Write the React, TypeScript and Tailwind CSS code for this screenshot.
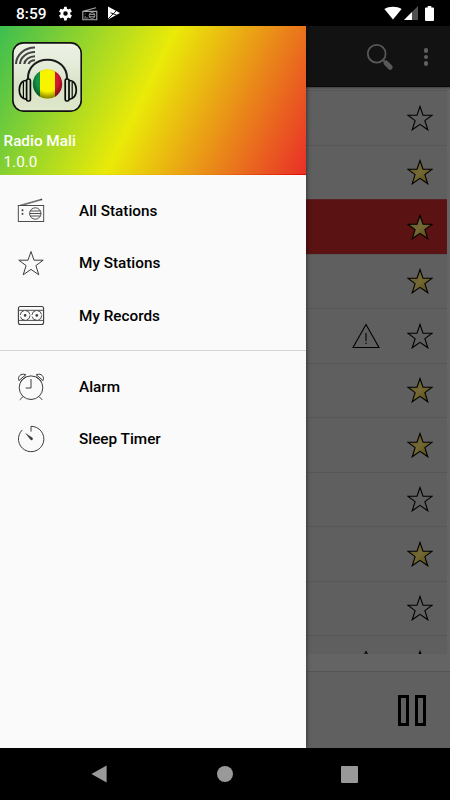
import React from 'react';

type IconProps = { className?: string };

interface Station {
  favorite: boolean;
  selected?: boolean;
  warning?: boolean;
}

const stations: Station[] = [
  { favorite: false },
  { favorite: true },
  { favorite: true, selected: true },
  { favorite: true },
  { favorite: false, warning: true },
  { favorite: true },
  { favorite: true },
  { favorite: false },
  { favorite: true },
  { favorite: false },
  { favorite: false, warning: true },
];

const STAR_POINTS = '13,1.5 16,10.2 25.2,10.2 17.9,15.6 20.8,24.8 13,19.4 5.2,24.8 8.1,15.6 0.8,10.2 10,10.2';

const RadioIcon: React.FC<IconProps> = ({ className }) => (
  <svg viewBox="0 0 28 28" className={className} fill="none" stroke="currentColor">
    <rect x="1.3" y="8.5" width="25.4" height="16" strokeWidth="0.9" />
    <path d="M3 8.2 24.5 2.2M6 8.2 24.5 2.8" strokeWidth="0.7" />
    <circle cx="24.3" cy="2.5" r="0.5" fill="currentColor" />
    <circle cx="18.3" cy="16.5" r="5.7" strokeWidth="0.9" />
    <path d="M13.2 14h10.2M12.6 16.5h11.4M13.2 19h10.2" strokeWidth="0.9" />
    <path d="M5.5 12.3v1.9M5.5 16.1v1.6" strokeWidth="1.6" />
  </svg>
);

const StarOutlineIcon: React.FC<IconProps> = ({ className }) => (
  <svg viewBox="0 0 26 26" className={className} fill="none" stroke="currentColor" strokeWidth="1">
    <polygon points={STAR_POINTS} />
  </svg>
);

const CassetteIcon: React.FC<IconProps> = ({ className }) => (
  <svg viewBox="0 0 28 28" className={className} fill="none" stroke="currentColor" strokeWidth="0.9">
    <rect x="1.4" y="4.5" width="25.2" height="18" rx="2" strokeWidth="1.1" />
    <path d="M1.4 8.3h25.2M1.4 18.4h25.2" />
    <circle cx="8.1" cy="13.4" r="4.9" strokeDasharray="6 1.7" />
    <circle cx="19.8" cy="13.4" r="4.9" strokeDasharray="6 1.7" />
    <circle cx="8.1" cy="13.4" r="1.3" fill="currentColor" stroke="none" />
    <circle cx="19.8" cy="13.4" r="1.3" fill="currentColor" stroke="none" />
  </svg>
);

const AlarmIcon: React.FC<IconProps> = ({ className }) => (
  <svg viewBox="0 0 28 28" className={className} fill="none" stroke="currentColor" strokeWidth="1">
    <circle cx="14" cy="14.7" r="11.8" />
    <path d="M14 6v9H8.7" />
    <path d="M1.9 7.6C.5 4.6 2.8 1 6.3 1.2l2.5.5zM26.1 7.6c1.4-3-.9-6.6-4.4-6.4l-2.5.5z" />
    <path d="m3.4 8.3 5.8-4.8M24.6 8.3l-5.8-4.8M6 23.6l-3.3 3.3M22 23.6l3.3 3.3" />
  </svg>
);

const TimerIcon: React.FC<IconProps> = ({ className }) => (
  <svg viewBox="0 0 28 28" className={className} fill="none" stroke="currentColor" strokeWidth="1">
    <path d="M14 6.6V1.3A12.7 12.7 0 1 1 5.3 4.9" />
    <path d="m8 7.8 7.4 4.9a1.3 1.3 0 0 1-1.9 2.1z" fill="currentColor" stroke="none" />
  </svg>
);

const FavoriteStar: React.FC<{ active: boolean }> = ({ active }) => (
  <svg viewBox="0 0 26 26" className="size-[26px]">
    <defs>
      <linearGradient id="gold" x1="0" y1="0" x2="1" y2="1">
        <stop offset="0.2" stopColor="#665b28" />
        <stop offset="0.5" stopColor="#756a36" />
        <stop offset="0.8" stopColor="#5d5215" />
      </linearGradient>
    </defs>
    <polygon points={STAR_POINTS} fill={active ? 'url(#gold)' : 'none'} stroke="#000" strokeWidth="1.1" />
  </svg>
);

const WarningIcon: React.FC = () => (
  <svg viewBox="0 0 28 26" className="h-[26px] w-7" fill="none" stroke="#000" strokeWidth="1.1">
    <path d="M14 1.6 27 24.5H1z" />
    <path d="M14 10v8M14 19.6v1.4" />
  </svg>
);

const AppLogo: React.FC<IconProps> = ({ className }) => (
  <svg viewBox="0 0 70 70" className={className} fill="none">
    <defs>
      <linearGradient id="plate" x1="0" y1="0" x2="0" y2="1">
        <stop offset="0" stopColor="#eef3e6" />
        <stop offset="0.45" stopColor="#e0e8d4" />
        <stop offset="0.6" stopColor="#d6e0c4" />
        <stop offset="1" stopColor="#e0e8cc" />
      </linearGradient>
      <clipPath id="ball">
        <circle cx="35.5" cy="42" r="14.7" />
      </clipPath>
      <radialGradient id="shade" cx="0.5" cy="0.4" r="0.6">
        <stop offset="0.6" stopColor="#000" stopOpacity="0" />
        <stop offset="1" stopColor="#000" stopOpacity="0.5" />
      </radialGradient>
    </defs>
    <rect x="0.9" y="0.9" width="68.3" height="68.2" rx="10.5" fill="url(#plate)" stroke="#111" strokeWidth="1.6" />
    <g stroke="#444" strokeWidth="2.1">
      <path d="M4 22A19 17 0 0 1 23 5.5" />
      <path d="M8 22A15 12.5 0 0 1 23 10" />
      <path d="M12.3 22A11 8.5 0 0 1 23 14.2" />
      <path d="M16.5 22A7 5 0 0 1 23 18.3" />
    </g>
    <path d="M16 37C15.5 24.500 25 17.700 35.5 17.700S55.500 24.500 55 37" stroke="#1c1c1c" strokeWidth="2" />
    <g clipPath="url(#ball)">
      <path d="M20 27h8v30h-8z" fill="#159447" />
      <path d="M28 27h15v30H28z" fill="#f8f400" />
      <path d="M43 27h8v30h-8z" fill="#d5182f" />
      <circle cx="35.5" cy="42" r="14.7" fill="url(#shade)" />
    </g>
    <g stroke="#080808" strokeWidth="1.7">
      <rect x="14.6" y="37" width="3.8" height="22" rx="1.6" />
      <path d="M14.6 38.5C9.500 38.300 7.300 43 7.300 48s2.200 8.700 7.300 9.300" />
      <path d="M11.400 40v16.500" strokeWidth="1.2" />
      <rect x="53.2" y="37" width="3.8" height="22" rx="1.6" />
      <path d="M57 38.500c5.100-.2 7.300 4.500 7.300 9.500s-2.200 8.700-7.300 9.300" />
      <path d="M60.200 40v16.500" strokeWidth="1.2" />
    </g>
  </svg>
);

const menuGroups = [
  [
    { label: 'All Stations', Icon: RadioIcon },
    { label: 'My Stations', Icon: StarOutlineIcon },
    { label: 'My Records', Icon: CassetteIcon },
  ],
  [
    { label: 'Alarm', Icon: AlarmIcon },
    { label: 'Sleep Timer', Icon: TimerIcon },
  ],
];

const StatusBar: React.FC = () => (
  <div className="flex h-[26px] shrink-0 items-center bg-black px-4 text-white">
    <span className="w-[42px] pt-[3px] text-[15.5px] leading-none font-medium">8:59</span>
    <svg viewBox="0 0 24 24" className="size-[15px]" fill="#fff">
      <path d="M19.5 13.2a8 8 0 0 0 0-2.4l2.7-2.1-2.6-4.5-3.2 1.3a8 8 0 0 0-2-1.2L13.9 1h-4l-.6 3.3a8 8 0 0 0-2 1.2L4.2 4.2 1.6 8.7l2.7 2.1a8 8 0 0 0 0 2.4l-2.7 2.1 2.6 4.5 3.1-1.3a8 8 0 0 0 2 1.2l.6 3.3h4l.5-3.3a8 8 0 0 0 2-1.2l3.2 1.3 2.6-4.5zM12 15.6a3.6 3.6 0 1 1 0-7.2 3.6 3.6 0 0 1 0 7.2z" />
    </svg>
    <svg viewBox="0 0 16 14" className="mt-px ml-[9px] h-[14px] w-4" fill="none" stroke="#aaa">
      <path d="M.8 4.4h14v8.400H.8zM2 4 14 .8" strokeWidth="1.1" />
      <circle cx="10" cy="8.5" r="2.9" strokeWidth="0.9" />
      <path d="M7.2 7.5h5.600M7.2 9.4h5.600M3.2 6.500v1M3.2 9v1M2 11h4.500" strokeWidth="0.8" />
    </svg>
    <svg viewBox="0 0 14 14" className="ml-[9px] size-[14px]">
      <path d="M1 .6 13 7 1 13.4z" fill="#fff" />
      <path d="M.8 13.2 9 5M3.5 6.8 9.5 9" stroke="#000" strokeWidth="0.9" />
    </svg>
    <div className="ml-auto flex items-center">
      <svg viewBox="0 0 18 14" className="h-[14px] w-[18px]" fill="#fff">
        <path d="M9 13.6.4 3.1C5 -.1 13-.1 17.6 3.1z" />
      </svg>
      <svg viewBox="0 0 14 14" className="ml-[2px] size-[14px]">
        <path d="M14 0v14H0z" fill="#505050" />
        <path d="M8 6v8H0z" fill="#fff" />
      </svg>
      <svg viewBox="0 0 9 15" className="ml-[7px] h-[15px] w-[9px]" fill="#fff">
        <path d="M2.7 0h3.600v1.400H8q1 0 1 1V14q0 1-1 1H1q-1 0-1-1V2.400q0-1 1-1h1.700z" />
      </svg>
    </div>
  </div>
);

const StationRow: React.FC<{ station: Station }> = ({ station }) => (
  <div
    className={`flex h-[54.5px] shrink-0 items-center justify-end gap-[27px] border-t pr-[14px] ${
      station.selected ? 'border-[#5a2222] bg-[#5a1212]' : 'border-[#575757] bg-[#5f5f5f]'
    }`}
  >
    {station.warning && <WarningIcon />}
    <FavoriteStar active={station.favorite} />
  </div>
);

const MainScreen: React.FC = () => (
  <div className="flex h-full flex-col bg-[#646464]">
    <div className="flex h-[61px] shrink-0 items-center justify-end border-b border-[#0a0a0a] bg-[#121212] pr-[22px] shadow-[0_1px_2px_rgba(0,0,0,0.4)]">
      <svg viewBox="0 0 28 28" className="mt-px mr-[30px] size-7" fill="none" stroke="#585858">
        <circle cx="10.7" cy="10.7" r="8.9" strokeWidth="1.8" />
        <path d="m17 17 3 3" strokeWidth="1.8" />
        <path d="m20 20 4.200 4.200" strokeWidth="5" strokeLinecap="round" />
      </svg>
      <div className="mt-[2px] flex flex-col gap-[2px]">
        <span className="size-[4.5px] rounded-full bg-[#606060]" />
        <span className="size-[4.5px] rounded-full bg-[#606060]" />
        <span className="size-[4.5px] rounded-full bg-[#606060]" />
      </div>
    </div>
    <div className="mt-[3px] mr-[3px] flex h-[564px] shrink-0 flex-col overflow-hidden">
      {stations.map((station, i) => (
        <StationRow key={i} station={station} />
      ))}
    </div>
    <div className="mt-auto flex h-[77px] items-center justify-end gap-[6px] border-t border-[#545454] bg-[#606060] pr-[24px]">
      <div className="h-[31px] w-[11px] border-[3px] border-black" />
      <div className="h-[31px] w-[11px] border-[3px] border-black" />
    </div>
  </div>
);

const Drawer: React.FC = () => (
  <div className="absolute inset-y-0 left-0 w-[306px] bg-[#fafafa] shadow-[0_0_5px_rgba(0,0,0,0.6)]">
    <div className="flex h-[148px] flex-col bg-[linear-gradient(116deg,#3cbe50_0%,#eaea08_47%,#e92f28_100%)] pt-[16px] pl-[3.5px] text-white">
      <AppLogo className="ml-[8.5px] size-[70px]" />
      <p className="mt-[19px] text-[15.3px] leading-[21px] font-medium">Radio Mali</p>
      <p className="text-[15.3px] leading-[21px]">1.0.0</p>
    </div>
    <div className="h-px bg-[linear-gradient(90deg,#8fd030_0%,#e6e000_34%,#e88a10_66%,#e00808_100%)]" />
    {menuGroups.map((group, i) => (
      <ul key={i} className={i === 0 ? 'pt-[9.5px] pb-2' : 'border-t border-[#d4d4d4] pt-[9.5px]'}>
        {group.map(({ label, Icon }) => (
          <li key={label} className="flex h-[52.5px] items-center pl-[16.5px]">
            <Icon className={`text-[#3c3c3c] ${label === 'My Stations' ? 'mx-px size-[26px]' : 'size-7'}`} />
            <span className="ml-[34.5px] pt-px text-[15.3px] font-medium text-black">{label}</span>
          </li>
        ))}
      </ul>
    ))}
  </div>
);

const NavigationBar: React.FC = () => (
  <div className="flex h-[52px] shrink-0 items-center justify-between bg-black pr-[92px] pl-[91px]">
    <svg viewBox="0 0 16 18" className="h-[18px] w-4" fill="#999">
      <path d="M15.6.4v17.2L.4 9z" />
    </svg>
    <span className="ml-px size-4 rounded-full bg-[#999]" />
    <span className="size-[17px] rounded-[1px] bg-[#999]" />
  </div>
);

const App: React.FC = () => (
  <div className="flex h-[800px] w-[450px] flex-col overflow-hidden bg-black font-[Roboto,sans-serif]">
    <StatusBar />
    <div className="relative h-[722px] shrink-0 overflow-hidden">
      <MainScreen />
      <Drawer />
    </div>
    <NavigationBar />
  </div>
);

export default App;
